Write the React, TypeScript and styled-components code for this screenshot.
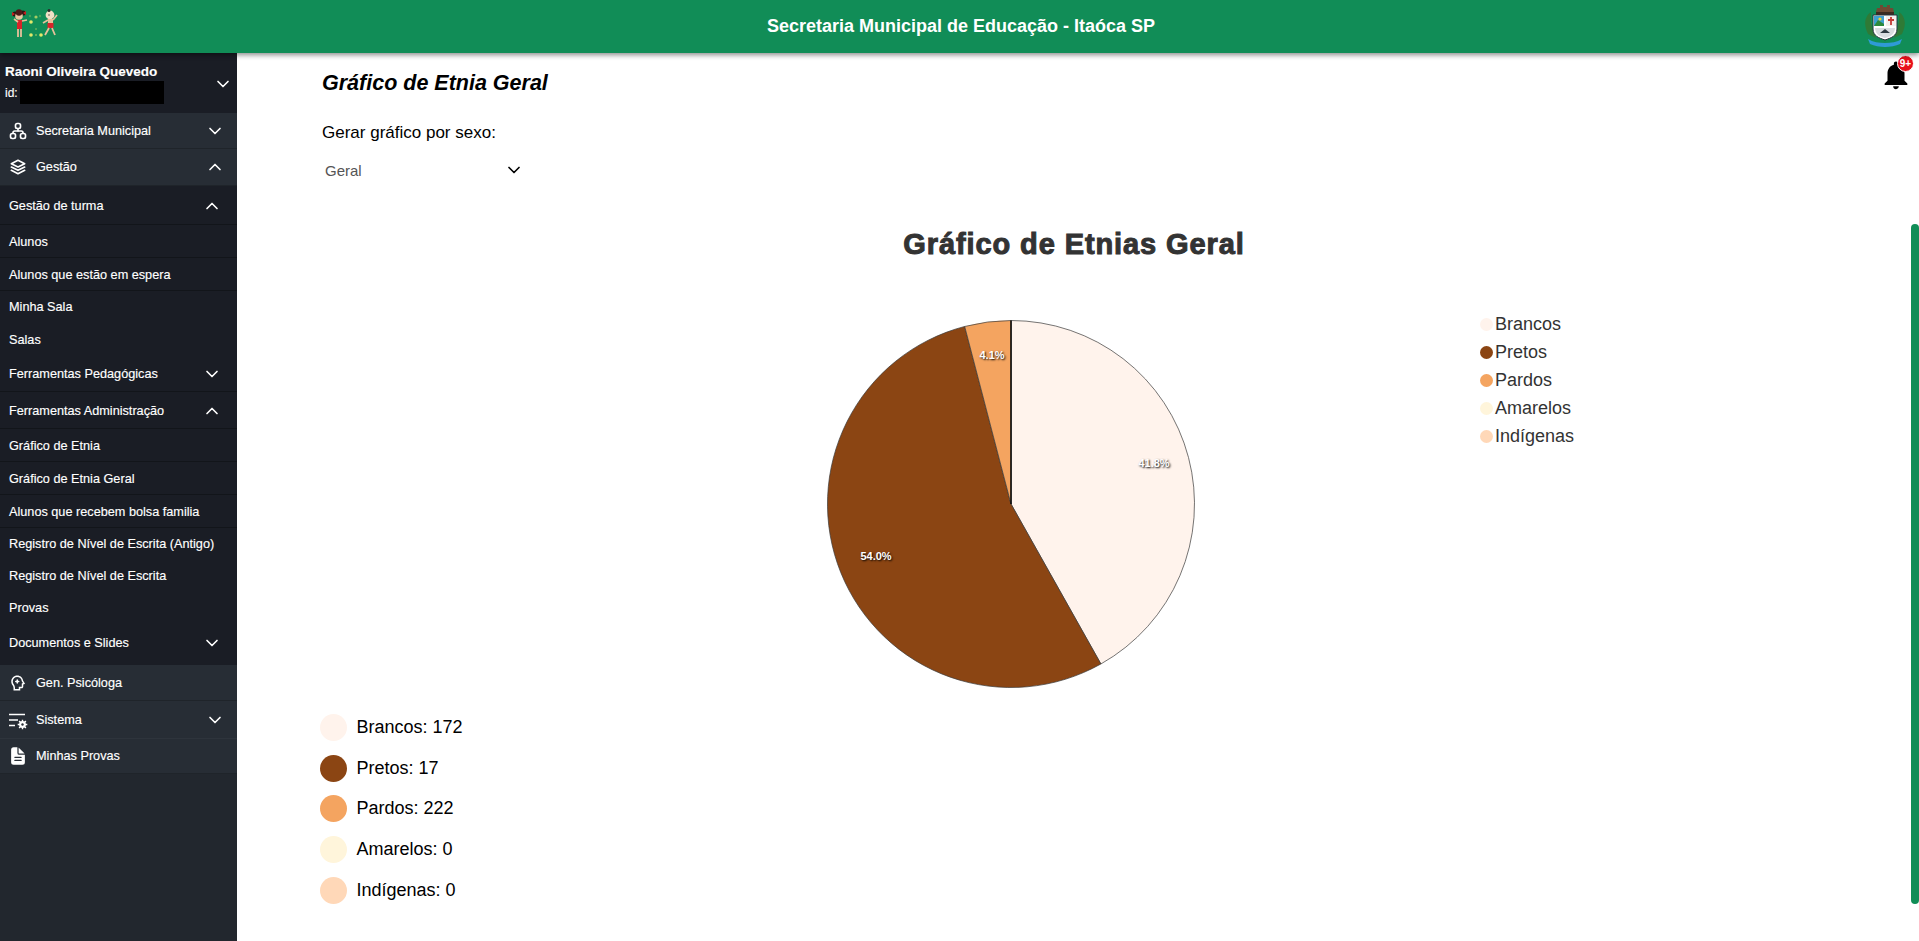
import React from "react";
import styled, { createGlobalStyle } from "styled-components";
import { ChevronDown, ChevronUp } from "lucide-react";
import { TbSitemap, TbStack2 } from "react-icons/tb";
import { RiPsychotherapyLine } from "react-icons/ri";
import { IoDocumentText } from "react-icons/io5";
import { MdNotifications } from "react-icons/md";

const Global = createGlobalStyle`
  html, body { margin: 0; padding: 0; height: 100%; overflow: hidden; background: #fff; }
  body { font-family: "Liberation Sans", Arial, sans-serif; }
  * { box-sizing: border-box; }
`;

const Page = styled.div`
  position: relative;
  height: 941px;
  display: flex;
  flex-direction: column;
  overflow: hidden;
`;
const Header = styled.header`
  height: 53px;
  flex: none;
  background: #118d57;
  display: flex;
  align-items: center;
  justify-content: space-between;
  padding: 0 11px 0 12px;
  box-shadow: 0 2px 5px rgba(0, 0, 0, 0.45);
  position: relative;
  z-index: 2;
`;
const HeaderTitle = styled.h1`
  margin: -1px 0 0;
  font-size: 18px;
  font-weight: 700;
  color: #fff;
`;
const Body = styled.div`
  flex: 1;
  display: flex;
  min-height: 0;
`;
const Sidebar = styled.nav`
  width: 237px;
  flex: none;
  background: #22272e;
  color: #fff;
  font-family: "Liberation Sans", sans-serif;
  font-size: 12.7px;
  -webkit-text-stroke: 0.15px #fff;
`;
const UserBlock = styled.div`
  height: 60px;
  background: #1a1d25;
  display: flex;
  align-items: center;
  justify-content: space-between;
  padding: 2px 4px 0 5px;
`;
const UserName = styled.div`
  font-weight: 700;
  font-size: 13.5px;
  line-height: 16px;
`;
const UserId = styled.div`
  display: flex;
  align-items: center;
  gap: 2px;
  font-size: 12px;
  margin-top: 1px;
`;
const Redacted = styled.span`
  display: block;
  width: 144px;
  height: 23px;
  background: #000;
`;
const MainRow = styled.div<{ $h: number; $last?: boolean }>`
  height: ${(p) => p.$h}px;
  background: #272d35;
  display: flex;
  align-items: center;
  padding: 0 12px 0 5px;
  border-bottom: 1px solid ${(p) => (p.$last ? "#2e343c" : "#1f242a")};
`;
const RowIcon = styled.span`
  width: 26px;
  margin-right: 5px;
  display: flex;
  justify-content: center;
  align-items: center;
  flex: none;
`;
const RowLabel = styled.span`
  flex: 1;
  white-space: nowrap;
`;
const SubMenu = styled.div`
  background: #1a1d25;
  padding-bottom: 4px;
`;
const SubRow = styled.div<{ $h: number; $line?: boolean }>`
  height: ${(p) => p.$h}px;
  display: flex;
  align-items: center;
  padding: 1px 15px 0 9px;
  border-bottom: 1px solid ${(p) => (p.$line ? "#12151a" : "transparent")};
`;
const Main = styled.main`
  flex: 1;
  min-width: 0;
  position: relative;
  padding: 17px 0 0 85px;
  color: #000;
`;
const PageTitle = styled.h2`
  margin: 0;
  font-size: 21.5px;
  line-height: 26px;
  font-weight: 700;
  font-style: italic;
`;
const FilterLabel = styled.div`
  margin-top: 27px;
  font-size: 17px;
  line-height: 20px;
`;
const Select = styled.div`
  width: 202px;
  height: 26px;
  margin-top: 14px;
  padding: 0 0 0 3px;
  display: flex;
  align-items: center;
  justify-content: space-between;
  font-size: 15px;
  color: #555;
`;
const ChartTitle = styled.h3`
  margin: 44px 0 0;
  width: 1504px;
  text-align: center;
  font-size: 29px;
  line-height: 34px;
  font-weight: 700;
  color: #333;
  -webkit-text-stroke: 1px #333;
  letter-spacing: 0.9px;
`;
const ChartRow = styled.div`
  display: flex;
  align-items: flex-start;
  margin-top: 59px;
  padding-left: 504px;
`;
const PieSvg = styled.svg`
  display: block;
  flex: none;
`;
const PieLabel = styled.text`
  font-family: "Liberation Sans", sans-serif;
  font-size: 11px;
  font-weight: 700;
  fill: #fff;
  text-anchor: middle;
  text-shadow: 1px 1px 2px #000;
`;
const PieLegend = styled.ul`
  list-style: none;
  margin: -10px 0 0 284px;
  padding: 0;
`;
const PieLegendItem = styled.li`
  display: flex;
  align-items: center;
  height: 28px;
  font-size: 18px;
  color: #333;
  gap: 2px;
`;
const Dot = styled.span<{ $c: string; $s: number }>`
  width: ${(p) => p.$s}px;
  height: ${(p) => p.$s}px;
  border-radius: 50%;
  background: ${(p) => p.$c};
  flex: none;
`;
const Totals = styled.ul`
  list-style: none;
  margin: 19px 0 0 -2px;
  padding: 0;
`;
const TotalItem = styled.li`
  display: flex;
  align-items: center;
  gap: 9.5px;
  height: 40.8px;
  font-size: 18px;
`;
const Bell = styled.div`
  position: absolute;
  top: 5px;
  right: 6px;
  width: 34px;
  height: 34px;
  display: flex;
  align-items: center;
  justify-content: center;
`;
const Badge = styled.span`
  position: absolute;
  top: -3px;
  right: -1px;
  width: 17px;
  height: 17px;
  border-radius: 50%;
  background: #e8101a;
  border: 1px solid #fff;
  color: #fff;
  font-size: 10px;
  font-weight: 700;
  display: flex;
  align-items: center;
  justify-content: center;
`;
const Scrollbar = styled.div`
  position: absolute;
  right: 0;
  top: 224px;
  width: 8px;
  height: 680px;
  border-radius: 4px;
  background: #118d57;
  z-index: 3;
`;

const Logo = () => (
  <svg width="48" height="32" viewBox="0 0 48 32" style={{ marginTop: -4, filter: "blur(0.35px)" }}>
    <circle cx="3" cy="5" r="2.6" fill="#2a1512" />
    <circle cx="11" cy="4" r="2.6" fill="#2a1512" />
    <circle cx="7" cy="7" r="3.8" fill="#e9c6a0" />
    <circle cx="7" cy="3.5" r="3.2" fill="#4a1a18" />
    <path d="M0 3l3 2-3 2zM14 2l-3 2 3 2z" fill="#c9201f" />
    <rect x="5" y="11" width="5" height="9" fill="#d6262a" />
    <path d="M2 10l4 3M10 12l5-1" stroke="#e6c19b" strokeWidth="1.6" />
    <path d="M6 20v8M9 20v8" stroke="#e6c19b" strokeWidth="1.8" />
    <g fill="#e2e86a">
      <circle cx="19" cy="13" r="1.8" />
      <circle cx="19" cy="26" r="1.8" />
      <circle cx="29" cy="26" r="1.8" />
      <circle cx="24" cy="26" r="1" opacity=".5" />
      <circle cx="24" cy="8" r="1.6" opacity=".7" />
      <circle cx="24" cy="20" r="1.1" opacity=".35" />
      <circle cx="18" cy="7" r="1.2" opacity=".25" />
      <circle cx="28" cy="7" r="1.2" opacity=".25" />
    </g>
    <circle cx="38" cy="6" r="4.4" fill="#efe0c6" />
    <circle cx="37" cy="1.5" r="1.5" fill="#2a2a2a" />
    <circle cx="37" cy="6" r=".7" fill="#333" />
    <path d="M36 10h5v4h-5z" fill="#e6c19b" />
    <rect x="35.5" y="14" width="6" height="5" fill="#d6262a" />
    <path d="M41 11l4-5M36 11l-5 3" stroke="#e6c19b" strokeWidth="1.7" />
    <path d="M37 19l-4 7M40 19l3 7" stroke="#e6c19b" strokeWidth="1.8" />
  </svg>
);

const Crest = () => (
  <svg width="46" height="46" viewBox="0 0 46 46" style={{ filter: "blur(0.3px)" }}>
    <path d="M6 30C1 20 3 12 9 8c-1 9 1 17 5 26zM40 30c5-10 3-18-3-22 1 9-1 17-5 26z" fill="#2f7a36" />
    <path d="M14 8l1-4h3V1h3v2h4V1h3v3h3l1 4z" fill="#6e4a34" />
    <rect x="14" y="8" width="18" height="3" fill="#3b2a20" />
    <path d="M11 11h24v14c0 7-6 9-12 11-6-2-12-4-12-11z" fill="#fff" stroke="#26323a" strokeWidth="1" />
    <rect x="12" y="12" width="10" height="10" fill="#3e9fd0" />
    <path d="M12 22l4-6 6 4v2z" fill="#2e8a3c" />
    <circle cx="18" cy="15" r="1.6" fill="#f2d230" />
    <rect x="24" y="12" width="10" height="10" fill="#f4f0ec" />
    <path d="M29 13v8M26 16h6" stroke="#c43a35" strokeWidth="1.8" />
    <path d="M13 24h20c0 6-5 9-10 10-5-1-10-4-10-10z" fill="#d9dde0" />
    <path d="M18 29l5-4 5 4z" fill="#2d3940" />
    <path d="M6 35c5 3 11 4 17 4s12-1 17-4l-2 5c-4 2-10 3-15 3s-11-1-15-3z" fill="#2f9ad6" />
  </svg>
);

const GearLines = () => (
  <svg width="20" height="20" viewBox="0 0 20 20" fill="none">
    <path d="M1 4.5h16M1 10h9M1 15.5h6" stroke="#fff" strokeWidth="1.5" />
    <circle cx="14.5" cy="14.5" r="3.4" fill="#fff" />
    <path d="M14.5 9.7v9.6M9.7 14.5h9.6M11.1 11.1l6.8 6.8M17.9 11.1l-6.8 6.8" stroke="#fff" strokeWidth="1.4" />
    <circle cx="14.5" cy="14.5" r="1.2" fill="#272d35" />
  </svg>
);

const CX = 185;
const CY = 184;
const R = 183.5;
const point = (frac: number, r = R) => {
  const a = 2 * Math.PI * frac - Math.PI / 2;
  return [CX + r * Math.cos(a), CY + r * Math.sin(a)];
};
const slices = [
  { c: "#fff3ec", from: 0, to: 0.4185, label: "41.8%", lx: 328, ly: 147 },
  { c: "#8b4513", from: 0.4185, to: 0.9594, label: "54.0%", lx: 50, ly: 240 },
  { c: "#f4a460", from: 0.9594, to: 1, label: "4.1%", lx: 166, ly: 39 },
];
const wedge = (from: number, to: number) => {
  const [x1, y1] = point(from);
  const [x2, y2] = point(to);
  const large = to - from > 0.5 ? 1 : 0;
  return `M${CX} ${CY}L${x1} ${y1}A${R} ${R} 0 ${large} 1 ${x2} ${y2}Z`;
};

const colors = { Brancos: "#fff3ec", Pretos: "#8b4513", Pardos: "#f4a460", Amarelos: "#fff5db", "Indígenas": "#ffd8b8" };
const totals: [keyof typeof colors, number][] = [
  ["Brancos", 172],
  ["Pretos", 17],
  ["Pardos", 222],
  ["Amarelos", 0],
  ["Indígenas", 0],
];

type Sub = { t: string; h: number; open?: boolean; closed?: boolean; line?: boolean };
const subs: Sub[] = [
  { t: "Gestão de turma", h: 39, open: true, line: true },
  { t: "Alunos", h: 33, line: true },
  { t: "Alunos que estão em espera", h: 33, line: true },
  { t: "Minha Sala", h: 32 },
  { t: "Salas", h: 33 },
  { t: "Ferramentas Pedagógicas", h: 36, closed: true, line: true },
  { t: "Ferramentas Administração", h: 37, open: true, line: true },
  { t: "Gráfico de Etnia", h: 33, line: true },
  { t: "Gráfico de Etnia Geral", h: 33, line: true },
  { t: "Alunos que recebem bolsa familia", h: 33, line: true },
  { t: "Registro de Nível de Escrita (Antigo)", h: 32 },
  { t: "Registro de Nível de Escrita", h: 32 },
  { t: "Provas", h: 32 },
  { t: "Documentos e Slides", h: 37, closed: true },
];

export default function App() {
  return (
    <Page>
      <Global />
      <Header>
        <Logo />
        <HeaderTitle>Secretaria Municipal de Educação - Itaóca SP</HeaderTitle>
        <Crest />
      </Header>
      <Body>
        <Sidebar>
          <UserBlock>
            <div>
              <UserName>Raoni Oliveira Quevedo</UserName>
              <UserId>
                id: <Redacted />
              </UserId>
            </div>
            <ChevronDown size={20} />
          </UserBlock>
          <MainRow $h={36}>
            <RowIcon><TbSitemap size={20} /></RowIcon>
            <RowLabel>Secretaria Municipal</RowLabel>
            <ChevronDown size={20} />
          </MainRow>
          <MainRow $h={37}>
            <RowIcon><TbStack2 size={20} /></RowIcon>
            <RowLabel>Gestão</RowLabel>
            <ChevronUp size={20} />
          </MainRow>
          <SubMenu>
            {subs.map((s) => (
              <SubRow key={s.t} $h={s.h} $line={s.line}>
                <RowLabel>{s.t}</RowLabel>
                {s.open && <ChevronUp size={20} />}
                {s.closed && <ChevronDown size={20} />}
              </SubRow>
            ))}
          </SubMenu>
          <MainRow $h={36}>
            <RowIcon><RiPsychotherapyLine size={18} /></RowIcon>
            <RowLabel>Gen. Psicóloga</RowLabel>
          </MainRow>
          <MainRow $h={38} $last>
            <RowIcon><GearLines /></RowIcon>
            <RowLabel>Sistema</RowLabel>
            <ChevronDown size={20} />
          </MainRow>
          <MainRow $h={35}>
            <RowIcon><IoDocumentText size={20} /></RowIcon>
            <RowLabel>Minhas Provas</RowLabel>
          </MainRow>
        </Sidebar>
        <Main>
          <PageTitle>Gráfico de Etnia Geral</PageTitle>
          <FilterLabel>Gerar gráfico por sexo:</FilterLabel>
          <Select>
            Geral
            <ChevronDown size={20} color="#000" />
          </Select>
          <ChartTitle>Gráfico de Etnias Geral</ChartTitle>
          <ChartRow>
            <PieSvg width="370" height="368" viewBox="0 0 370 368">
              {slices.map((s) => (
                <path key={s.label} d={wedge(s.from, s.to)} fill={s.c} stroke="#3a3a3a" strokeWidth="0.7" />
              ))}
              <path d={`M${CX} ${CY}V${CY - R}`} stroke="#000" strokeWidth="1.4" />
              {slices.map((s) => (
                <PieLabel key={s.label} x={s.lx} y={s.ly}>{s.label}</PieLabel>
              ))}
            </PieSvg>
            <PieLegend>
              {totals.map(([n]) => (
                <PieLegendItem key={n}>
                  <Dot $c={colors[n]} $s={13} />
                  {n}
                </PieLegendItem>
              ))}
            </PieLegend>
          </ChartRow>
          <Totals>
            {totals.map(([n, v]) => (
              <TotalItem key={n}>
                <Dot $c={colors[n]} $s={27} />
                {n}: {v}
              </TotalItem>
            ))}
          </Totals>
          <Bell>
            <MdNotifications size={36} color="#000" />
            <Badge>9+</Badge>
          </Bell>
        </Main>
      </Body>
      <Scrollbar />
    </Page>
  );
}
